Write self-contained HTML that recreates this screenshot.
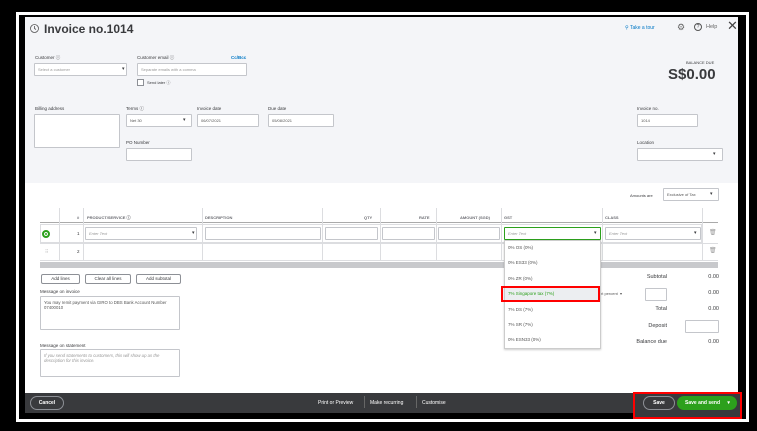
<!DOCTYPE html><html><head><style>
*{margin:0;padding:0;box-sizing:border-box}
body{width:757px;height:431px;background:#000;position:relative;overflow:hidden;font-family:"Liberation Sans",sans-serif;color:#393a3d}
.a{position:absolute}
.l{position:absolute;font-size:4.5px;color:#393a3d}
.i{position:absolute;background:#fff;border:1px solid #c4c6cb;border-radius:1px;font-size:4px;color:#999;padding:3px 3px}
.b{position:absolute;border:1px solid #8d9096;border-radius:2px;background:#fff;font-size:4.5px;text-align:center;line-height:8px}
.dd{position:absolute;font-size:5px;color:#393a3d}
.th{position:absolute;font-size:4px;font-weight:bold;top:215px;color:#6b6c72}
.vl{position:absolute;width:1px;background:#dcdde0}
.it{position:absolute;left:508px;font-size:4.5px;color:#555}
.tr{position:absolute;font-size:5.5px;text-align:right}
</style></head><body>
<div class="a" style="left:16px;top:12px;width:733px;height:410px;background:#fff"></div>
<div class="a" style="left:19px;top:15px;width:727px;height:404px;background:#000"></div>
<div class="a" style="left:25px;top:17px;width:713px;height:376px;background:#fff"></div>
<div class="a" style="left:25px;top:17px;width:713px;height:166px;background:#f4f5f8"></div>
<!-- header -->
<svg class="a" style="left:29px;top:23px" width="11" height="11" viewBox="0 0 11 11"><circle cx="5.5" cy="5.5" r="4" fill="none" stroke="#555" stroke-width="0.8"/><path d="M5.5 3v2.5l1.5 1" stroke="#555" stroke-width="0.8" fill="none"/></svg>
<div class="a" style="left:44px;top:22px;font-size:12px;font-weight:bold">Invoice no.1014</div>
<div class="a" style="left:625px;top:25px;font-size:5px;color:#0077c5">⚲ Take a tour</div>
<div class="a" style="left:677px;top:22px;font-size:9px;color:#666">⚙</div>
<div class="a" style="left:694px;top:23px;width:8px;height:8px;border:1px solid #555;border-radius:50%;font-size:5px;text-align:center;line-height:6px">?</div>
<div class="a" style="left:706px;top:24px;font-size:5.5px;color:#666">Help</div>
<div class="a" style="left:727px;top:18px;font-size:13px;color:#444">✕</div>
<div class="l" style="left:35px;top:55px">Customer ⓘ</div>
<div class="i" style="left:34px;top:63px;width:93px;height:13px">Select a customer</div>
<div class="dd" style="left:122px;top:66px">▾</div>
<div class="l" style="left:137px;top:55px">Customer email ⓘ</div>
<div class="l" style="left:231px;top:55px;color:#0077c5;font-weight:bold">Cc/Bcc</div>
<div class="i" style="left:137px;top:63px;width:110px;height:13px">Separate emails with a comma</div>
<div class="a" style="left:137px;top:79px;width:7px;height:7px;border:1px solid #8d9096;background:#fff"></div>
<div class="l" style="left:147px;top:80px;font-size:4px">Send later ⓘ</div>
<div class="l" style="left:35px;top:106px">Billing address</div>
<div class="i" style="left:34px;top:114px;width:86px;height:34px"></div>
<div class="l" style="left:126px;top:106px">Terms ⓘ</div>
<div class="i" style="left:126px;top:114px;width:66px;height:13px;color:#555">Net 30</div>
<div class="dd" style="left:183px;top:117px">▾</div>
<div class="l" style="left:197px;top:106px">Invoice date</div>
<div class="i" style="left:197px;top:114px;width:62px;height:13px;color:#555">06/07/2021</div>
<div class="l" style="left:268px;top:106px">Due date</div>
<div class="i" style="left:268px;top:114px;width:66px;height:13px;color:#555">05/08/2021</div>
<div class="l" style="left:126px;top:140px">PO Number</div>
<div class="i" style="left:126px;top:148px;width:66px;height:13px"></div>
<div class="l" style="left:686px;top:60px;font-size:4px">BALANCE DUE</div>
<div class="a" style="left:668px;top:66px;font-size:15px;font-weight:bold">S$0.00</div>
<div class="l" style="left:637px;top:106px">Invoice no.</div>
<div class="i" style="left:637px;top:114px;width:61px;height:13px;color:#555">1014</div>
<div class="l" style="left:637px;top:140px">Location</div>
<div class="i" style="left:637px;top:148px;width:86px;height:13px"></div>
<div class="dd" style="left:713px;top:151px">▾</div>
<div class="l" style="left:630px;top:193px;font-size:4px">Amounts are</div>
<div class="i" style="left:663px;top:188px;width:56px;height:13px;color:#555">Exclusive of Tax</div>
<div class="dd" style="left:710px;top:191px">▾</div>
<!-- table -->
<div class="a" style="left:40px;top:222px;width:678px;height:1px;background:#aaa"></div>
<div class="a" style="left:40px;top:243px;width:678px;height:1px;background:#dcdde0"></div>
<div class="a" style="left:40px;top:260px;width:678px;height:1px;background:#dcdde0"></div>
<div class="a" style="left:40px;top:224px;width:662px;height:19px;border:1px solid #dcdde0"></div>
<div class="vl" style="left:59px;top:208px;height:52px"></div>
<div class="vl" style="left:83px;top:208px;height:52px"></div>
<div class="vl" style="left:202px;top:208px;height:52px"></div>
<div class="vl" style="left:322px;top:208px;height:52px"></div>
<div class="vl" style="left:380px;top:208px;height:52px"></div>
<div class="vl" style="left:436px;top:208px;height:52px"></div>
<div class="vl" style="left:501px;top:208px;height:52px"></div>
<div class="vl" style="left:602px;top:208px;height:52px"></div>
<div class="vl" style="left:702px;top:208px;height:52px"></div>
<div class="th" style="left:77px">#</div>
<div class="th" style="left:87px">PRODUCT/SERVICE ⓘ</div>
<div class="th" style="left:205px">DESCRIPTION</div>
<div class="th" style="left:364px">QTY</div>
<div class="th" style="left:419px">RATE</div>
<div class="th" style="left:460px">AMOUNT (SGD)</div>
<div class="th" style="left:504px">GST</div>
<div class="th" style="left:605px">CLASS</div>
<div class="a" style="left:42px;top:230px;width:8px;height:8px;border-radius:50%;background:#2ca01c;border:2px solid #2ca01c;box-shadow:inset 0 0 0 1px #fff"></div>
<div class="l" style="left:77px;top:231px">1</div>
<div class="l" style="left:77px;top:249px">2</div>
<div class="l" style="left:45px;top:249px;color:#aaa">⠿</div>
<div class="i" style="left:85px;top:227px;width:112px;height:13px;font-style:italic">Enter Text</div>
<div class="dd" style="left:192px;top:230px">▾</div>
<div class="i" style="left:205px;top:227px;width:116px;height:13px"></div>
<div class="i" style="left:325px;top:227px;width:53px;height:13px"></div>
<div class="i" style="left:382px;top:227px;width:53px;height:13px"></div>
<div class="i" style="left:438px;top:227px;width:62px;height:13px"></div>
<div class="i" style="left:504px;top:227px;width:97px;height:13px;border-color:#2ca01c;font-style:italic">Enter Text</div>
<div class="dd" style="left:594px;top:230px">▾</div>
<div class="i" style="left:605px;top:227px;width:96px;height:13px;font-style:italic">Enter Text</div>
<div class="dd" style="left:694px;top:230px">▾</div>
<div class="l" style="left:709px;top:229px;color:#999;font-size:6px">🗑</div>
<div class="l" style="left:709px;top:247px;color:#999;font-size:6px">🗑</div>
<div class="a" style="left:40px;top:262px;width:678px;height:6px;background:#c8c9cc"></div>
<!-- buttons -->
<div class="b" style="left:41px;top:274px;width:39px;height:10px">Add lines</div>
<div class="b" style="left:85px;top:274px;width:46px;height:10px">Clear all lines</div>
<div class="b" style="left:136px;top:274px;width:45px;height:10px">Add subtotal</div>
<div class="l" style="left:40px;top:289px">Message on invoice</div>
<div class="i" style="left:40px;top:296px;width:140px;height:34px;color:#555;font-size:4.3px">You may remit payment via GIRO to DBS Bank Account Number 07400010</div>
<div class="l" style="left:40px;top:343px">Message on statement</div>
<div class="i" style="left:40px;top:349px;width:140px;height:28px;font-style:italic;font-size:4.3px">If you send statements to customers, this will show up as the description for this invoice.</div>
<!-- totals -->
<div class="tr" style="left:600px;top:274px;width:67px">Subtotal</div>
<div class="tr" style="left:680px;top:274px;width:39px">0.00</div>
<div class="i" style="left:600px;top:288px;width:35px;height:12px;border:none;color:#555;padding:3px 0">nt percent &nbsp;▾</div>
<div class="i" style="left:645px;top:288px;width:22px;height:13px"></div>
<div class="tr" style="left:680px;top:290px;width:39px">0.00</div>
<div class="tr" style="left:600px;top:306px;width:67px">Total</div>
<div class="tr" style="left:680px;top:306px;width:39px">0.00</div>
<div class="tr" style="left:600px;top:323px;width:67px">Deposit</div>
<div class="i" style="left:685px;top:320px;width:34px;height:13px"></div>
<div class="tr" style="left:600px;top:339px;width:67px">Balance due</div>
<div class="tr" style="left:680px;top:339px;width:39px">0.00</div>
<!-- dropdown -->
<div class="a" style="left:504px;top:240px;width:97px;height:109px;background:#fff;border:1px solid #ccc;box-shadow:0 1px 2px rgba(0,0,0,.2)"></div>
<div class="it" style="top:245px">0% OS (0%)</div>
<div class="it" style="top:260px">0% ES33 (0%)</div>
<div class="it" style="top:276px">0% ZR (0%)</div>
<div class="a" style="left:505px;top:288px;width:95px;height:12px;background:#eceef1"></div>
<div class="it" style="top:291px;color:#2ca01c">7% Singapore tax (7%)</div>
<div class="a" style="left:501px;top:286px;width:99px;height:16px;border:2px solid #f00"></div>
<div class="it" style="top:307px">7% DS (7%)</div>
<div class="it" style="top:322px">7% SR (7%)</div>
<div class="it" style="top:337px">0% ESN33 (0%)</div>
<!-- footer -->
<div class="a" style="left:25px;top:393px;width:713px;height:20px;background:#393a3d"></div>
<div class="a" style="left:30px;top:396px;width:34px;height:14px;border:1px solid #8d9096;border-radius:8px;color:#fff;font-size:5px;font-weight:bold;text-align:center;line-height:12px">Cancel</div>
<div class="a" style="left:318px;top:400px;font-size:5px;color:#fff">Print or Preview</div>
<div class="a" style="left:364px;top:396px;width:1px;height:12px;background:#666"></div>
<div class="a" style="left:370px;top:400px;font-size:5px;color:#fff">Make recurring</div>
<div class="a" style="left:416px;top:396px;width:1px;height:12px;background:#666"></div>
<div class="a" style="left:422px;top:400px;font-size:5px;color:#fff">Customise</div>
<div class="a" style="left:633px;top:392px;width:109px;height:27px;border:2px solid #f00;background:#393a3d"></div>
<div class="a" style="left:643px;top:396px;width:32px;height:14px;border:1px solid #8d9096;border-radius:8px;color:#fff;font-size:5px;font-weight:bold;text-align:center;line-height:12px">Save</div>
<div class="a" style="left:677px;top:396px;width:60px;height:14px;background:#2ca01c;border-radius:8px;color:#fff;font-size:5px;font-weight:bold;line-height:14px;padding-left:8px">Save and send <span style="margin-left:6px">▾</span></div>
</body></html>
